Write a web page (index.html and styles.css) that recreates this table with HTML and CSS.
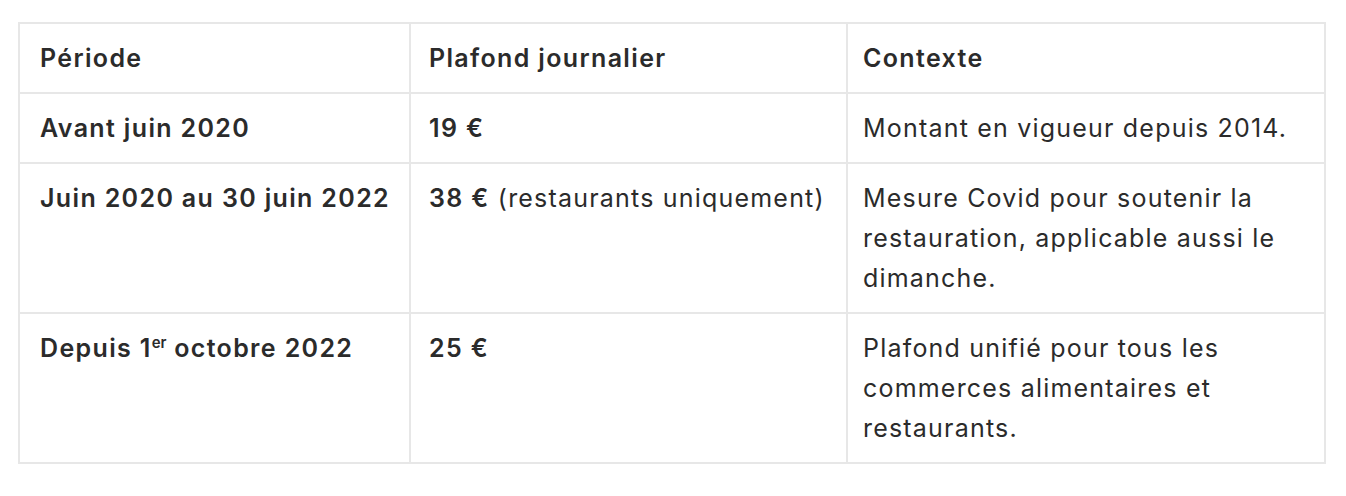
FILE: index.html
```html
<!DOCTYPE html>
<html lang="fr">
<head>
<meta charset="utf-8">
<link rel="stylesheet" href="styles.css">
</head>
<body>
<table class="plafonds">
  <colgroup>
    <col class="c1"><col class="c2"><col class="c3">
  </colgroup>
  <thead>
    <tr><th>Période</th><th>Plafond journalier</th><th>Contexte</th></tr>
  </thead>
  <tbody>
    <tr>
      <td><strong>Avant juin 2020</strong></td>
      <td><strong>19 €</strong></td>
      <td>Montant en vigueur depuis 2014.</td>
    </tr>
    <tr>
      <td><strong>Juin 2020 au 30 juin 2022</strong></td>
      <td><strong>38 €</strong> (restaurants uniquement)</td>
      <td>Mesure Covid pour soutenir la restauration, applicable aussi le dimanche.</td>
    </tr>
    <tr>
      <td><strong>Depuis 1<sup>er</sup> octobre 2022</strong></td>
      <td><strong>25 €</strong></td>
      <td>Plafond unifié pour tous les commerces alimentaires et restaurants.</td>
    </tr>
  </tbody>
</table>
</body>
</html>
```
FILE: styles.css
```css
html, body {
  margin: 0;
  background: #ffffff;
}
body {
  padding: 22px 20px 0 18px;
  font-family: Inter, "Noto Sans", "Liberation Sans", sans-serif;
  font-size: 25px;
  line-height: 40px;
  letter-spacing: 1.2px;
  color: #2b2b2b;
}
.plafonds {
  border-collapse: collapse;
  width: 1306px;
  table-layout: fixed;
}
.c1 { width: 391px; }
.c2 { width: 437px; }
.c3 { width: 478px; }
.plafonds th,
.plafonds td {
  border: 2px solid #e7e7e7;
  padding: 14px 10px 14px 20px;
  text-align: left;
  vertical-align: top;
}
.plafonds th:nth-child(2),
.plafonds td:nth-child(2) {
  padding-left: 18px;
}
.plafonds th:nth-child(3),
.plafonds td:nth-child(3) {
  padding-left: 15px;
}
.plafonds th,
.plafonds strong {
  font-weight: 600;
  letter-spacing: 1.35px;
}
.plafonds sup {
  font-size: 15px;
  line-height: 0;
  letter-spacing: 0;
  vertical-align: 9px;
}
```
